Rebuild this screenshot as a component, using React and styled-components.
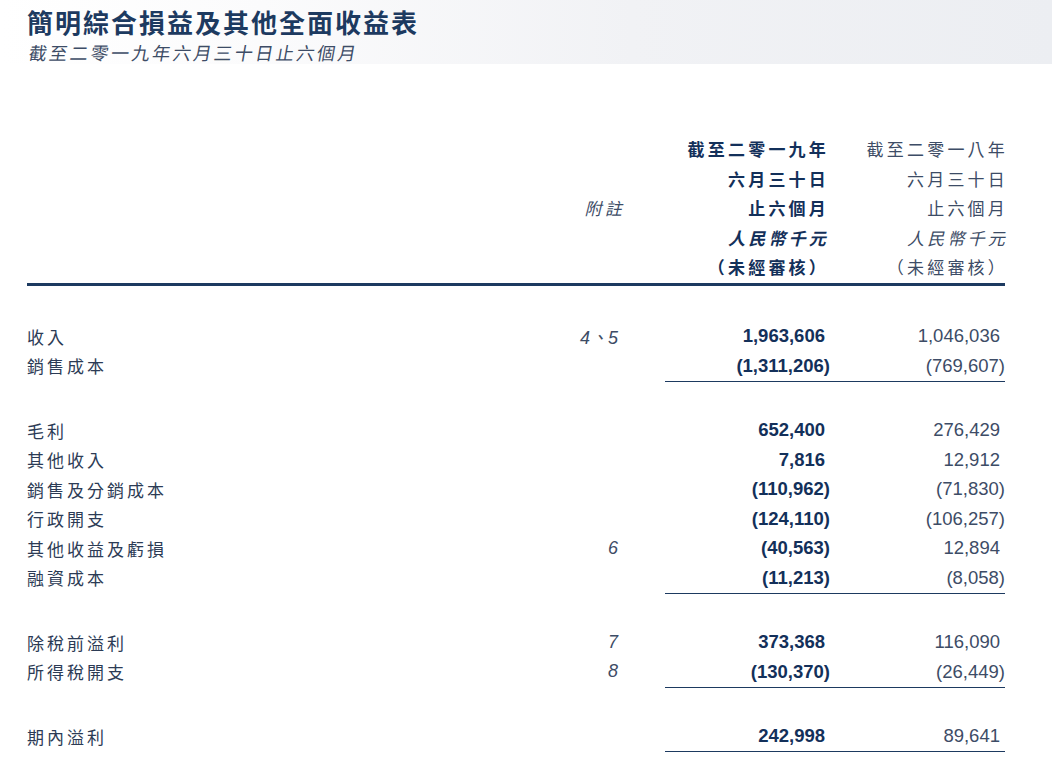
import React from "react";
import styled, { createGlobalStyle } from "styled-components";

const Global = createGlobalStyle`
  body { margin: 0; background: #fff; font-family: "Liberation Sans", "Noto Sans CJK TC", sans-serif; }
`;

const Page = styled.div`
  width: 1052px;
  height: 774px;
  overflow: hidden;
`;

const Banner = styled.div`
  height: 64px;
  padding-left: 27px;
  background: linear-gradient(90deg, #fff 0%, #fbfbfc 25%, #f1f2f5 60%, #eceef2 100%);
  display: flex;
  flex-direction: column;
`;

const Title = styled.h1`
  margin: 0;
  padding-top: 4px;
  font-family: "Noto Sans CJK TC", sans-serif;
  font-size: 26px;
  font-weight: 700;
  color: #1d3a60;
  letter-spacing: 2px;
  height: 36px;
  line-height: 36px;
`;

const Sub = styled.div`
  font-family: "Noto Sans CJK TC", sans-serif;
  font-size: 18px;
  color: #3d4c66;
  letter-spacing: 2.6px;
  line-height: 24px;
  transform: skewX(-10deg);
  transform-origin: left bottom;
`;

const Table = styled.div`
  margin: 70px 47px 0 27px;
`;

const Row = styled.div`
  display: grid;
  grid-template-columns: 1fr 100px 208px 175px;
  align-items: center;
  height: 29.5px;
`;

const Label = styled.div`
  font-family: "Noto Sans CJK TC", sans-serif;
  font-size: 17px;
  color: #2c3b55;
  letter-spacing: 3px;
`;

const Note = styled.div`
  text-align: right;
  padding-right: 4px;
  font-family: "Liberation Sans", "Noto Sans CJK TC", sans-serif;
  font-style: italic;
  font-size: 18px;
  color: #3d4c66;
`;

const Head = styled.div`
  text-align: right;
  padding-right: ${(p) => (p.cur ? 4 : 0)}px;
  font-family: "Noto Sans CJK TC", sans-serif;
  font-size: 17px;
  font-weight: ${(p) => (p.cur ? 700 : 400)};
  font-style: ${(p) => (p.it ? "italic" : "normal")};
  color: ${(p) => (p.cur ? "#13305a" : "#3d4c66")};
  letter-spacing: 3.2px;
  margin-right: -3px;
`;

const Num = styled.div`
  text-align: right;
  font-size: 18.5px;
  font-weight: ${(p) => (p.cur ? 700 : 400)};
  color: ${(p) => (p.cur ? "#13305a" : "#3d4c66")};
  padding-right: ${(p) => (p.neg ? 0 : 5)}px;
`;

const Rule = styled.div`
  height: 3px;
  background: #1d3a60;
  margin: 1px 0 36px;
`;

const Line = styled.div`
  margin-left: 638px;
  border-bottom: 1px solid #1d3a60;
`;

const heads = [
  ["截至二零一九年", "截至二零一八年", ""],
  ["六月三十日", "六月三十日", ""],
  ["止六個月", "止六個月", "附註"],
  ["人民幣千元", "人民幣千元", "", true],
  ["（未經審核）", "（未經審核）", ""],
];

const groups = [
  [
    ["收入", "4、5", "1,963,606", "1,046,036"],
    ["銷售成本", "", "(1,311,206)", "(769,607)"],
  ],
  [
    ["毛利", "", "652,400", "276,429"],
    ["其他收入", "", "7,816", "12,912"],
    ["銷售及分銷成本", "", "(110,962)", "(71,830)"],
    ["行政開支", "", "(124,110)", "(106,257)"],
    ["其他收益及虧損", "6", "(40,563)", "12,894"],
    ["融資成本", "", "(11,213)", "(8,058)"],
  ],
  [
    ["除稅前溢利", "7", "373,368", "116,090"],
    ["所得稅開支", "8", "(130,370)", "(26,449)"],
  ],
  [["期內溢利", "", "242,998", "89,641"]],
];

export default function App() {
  return (
    <Page>
      <Global />
      <Banner>
        <Title>簡明綜合損益及其他全面收益表</Title>
        <Sub>截至二零一九年六月三十日止六個月</Sub>
      </Banner>
      <Table>
        {heads.map(([a, b, n, it], i) => (
          <Row key={i}>
            <span />
            <Head it>{n}</Head>
            <Head cur it={it}>{a}</Head>
            <Head it={it}>{b}</Head>
          </Row>
        ))}
        <Rule />
        {groups.map((g, gi) => (
          <div key={gi} style={{ marginTop: gi ? 34 : 0 }}>
            {g.map(([l, n, a, b]) => (
              <Row key={l}>
                <Label>{l}</Label>
                <Note>{n}</Note>
                <Num cur neg={a.startsWith("(")}>{a}</Num>
                <Num neg={b.startsWith("(")}>{b}</Num>
              </Row>
            ))}
            <Line />
          </div>
        ))}
      </Table>
    </Page>
  );
}
